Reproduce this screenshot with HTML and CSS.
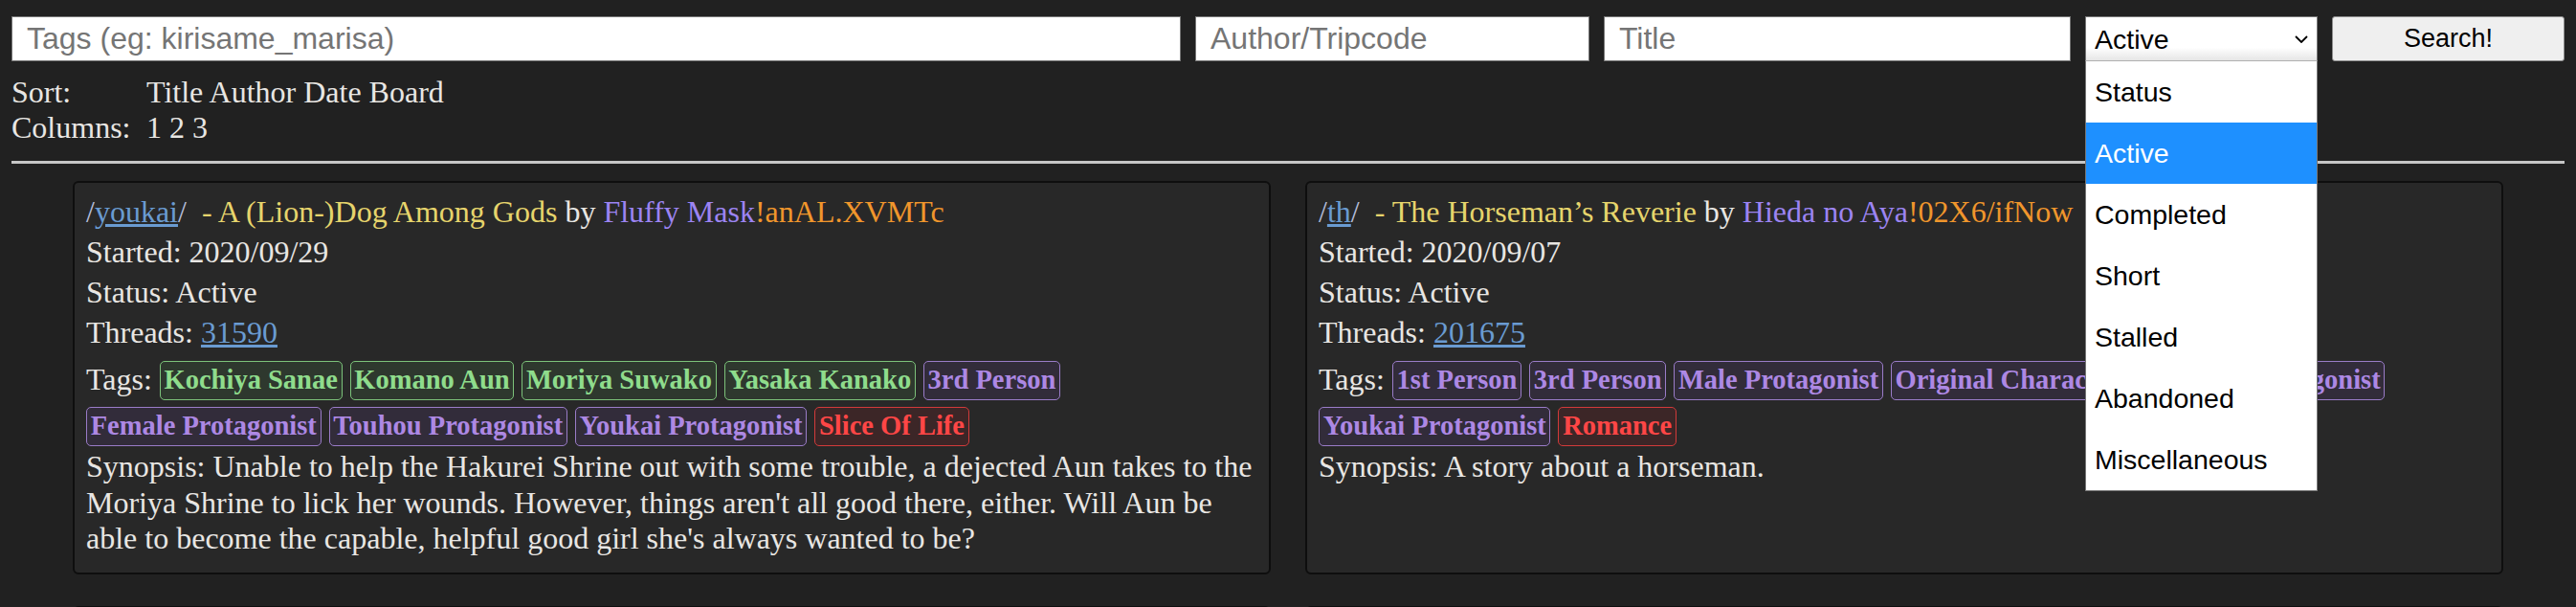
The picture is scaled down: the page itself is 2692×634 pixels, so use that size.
FILE: index.html
```html
<!DOCTYPE html>
<html>
<head>
	<title>Story Search</title>
	<link rel="stylesheet" href="styles.css">
</head>
<body>
	<form class="search" id="search-form">
		<input type="text" class="tags-input" name="tags" placeholder="Tags (eg: kirisame_marisa)">
		<input type="text" class="author-input" name="author" placeholder="Author/Tripcode">
		<input type="text" class="title-input" name="title" placeholder="Title">
		<div class="status-select">
			<select name="status">
				<option>Status</option>
				<option selected>Active</option>
				<option>Completed</option>
				<option>Short</option>
				<option>Stalled</option>
				<option>Abandoned</option>
				<option>Miscellaneous</option>
			</select>
			<svg class="chevron" width="14" height="8" viewBox="0 0 14 8"><path d="M1 1 L7 7 L13 1" fill="none" stroke="#000" stroke-width="1.8"/></svg>
			<ul class="status-menu">
				<li>Status</li>
				<li class="selected">Active</li>
				<li>Completed</li>
				<li>Short</li>
				<li>Stalled</li>
				<li>Abandoned</li>
				<li>Miscellaneous</li>
			</ul>
		</div>
		<button type="submit">Search!</button>
	</form>

	<div class="options">
		<span>Sort:</span>
		<span><a href="#">Title</a> <a href="#">Author</a> <a href="#">Date</a> <a href="#">Board</a></span>
		<span>Columns:</span>
		<span><a href="#">1</a> <a href="#">2</a> <a href="#">3</a></span>
	</div>
	<hr>

	<div class="stories">
		<div class="story">
			<div class="line"><span class="board">/<a href="#">youkai</a>/</span> &nbsp;<span class="subject">- A (Lion-)Dog Among Gods</span> by <span class="name">Fluffy Mask</span><span class="trip">!anAL.XVMTc</span></div>
			<div class="line">Started: 2020/09/29</div>
			<div class="line">Status: Active</div>
			<div class="line">Threads: <a href="#">31590</a></div>
			<div class="tags">Tags: <span class="tag green">Kochiya Sanae</span> <span class="tag green">Komano Aun</span> <span class="tag green">Moriya Suwako</span> <span class="tag green">Yasaka Kanako</span> <span class="tag purple">3rd Person</span> <span class="tag purple">Female Protagonist</span> <span class="tag purple">Touhou Protagonist</span> <span class="tag purple">Youkai Protagonist</span> <span class="tag red">Slice Of Life</span></div>
			<div class="synopsis">Synopsis: Unable to help the Hakurei Shrine out with some trouble, a dejected Aun takes to the Moriya Shrine to lick her wounds. However, things aren't all good there, either. Will Aun be able to become the capable, helpful good girl she's always wanted to be?</div>
		</div>
		<div class="story">
			<div class="line"><span class="board">/<a href="#">th</a>/</span> &nbsp;<span class="subject">- The Horseman’s Reverie</span> by <span class="name">Hieda no Aya</span><span class="trip">!02X6/ifNow</span></div>
			<div class="line">Started: 2020/09/07</div>
			<div class="line">Status: Active</div>
			<div class="line">Threads: <a href="#">201675</a></div>
			<div class="tags">Tags: <span class="tag purple">1st Person</span> <span class="tag purple">3rd Person</span> <span class="tag purple">Male Protagonist</span> <span class="tag purple">Original Character</span> <span class="tag purple">Outsider Protagonist</span> <span class="tag purple">Youkai Protagonist</span> <span class="tag red">Romance</span></div>
			<div class="synopsis">Synopsis: A story about a horseman.</div>
		</div>
		<div class="story">
			<div class="line"><span class="board">/<a href="#">th</a>/</span> &nbsp;<span class="subject">- Scarlet Tea Party</span> by <span class="name">Anonymous</span></div>
			<div class="line">Started: 2020/08/14</div>
			<div class="line">Status: Active</div>
			<div class="line">Threads: <a href="#">199802</a></div>
		</div>
		<div class="story">
			<div class="line"><span class="board">/<a href="#">youkai</a>/</span> &nbsp;<span class="subject">- Lanterns of the Old Capital</span> by <span class="name">Anonymous</span></div>
			<div class="line">Started: 2020/08/02</div>
			<div class="line">Status: Active</div>
			<div class="line">Threads: <a href="#">31422</a></div>
		</div>
	</div>
</body>
</html>
```

FILE: styles.css
```css
body {
	margin: 12px;
	background-color: #212121;
	color: #e8e6e3;
	font-family: "Liberation Serif", "Times New Roman", serif;
	font-size: 32px;
}
a {
	color: #6a9bd1;
}
.search {
	display: flex;
	gap: 15px;
	margin: 0;
	padding-top: 5px;
}
.search input[type="text"] {
	flex: none;
	height: 47px;
	padding: 0 15px;
	border: 1px solid #767676;
	background-color: #fff;
	color: #000;
	font-family: "Liberation Sans", Arial, sans-serif;
	font-size: 32px;
	box-sizing: border-box;
}
.search input::placeholder {
	color: #757575;
}
.search input.tags-input {
	flex: 1 1 auto;
	width: 0;
	min-width: 0;
}
.search input.author-input {
	width: 412px;
}
.search input.title-input {
	width: 488px;
}
.status-select {
	position: relative;
	flex: none;
	width: 243px;
}
.status-select select {
	appearance: none;
	display: block;
	width: 100%;
	height: 47px;
	margin: 0;
	padding: 0 0 0 9px;
	border: 1px solid #767676;
	border-bottom-color: #b0b0b0;
	background: linear-gradient(#fff 70%, #e6e6e6);
	color: #000;
	font-family: "Liberation Sans", Arial, sans-serif;
	font-size: 28.5px;
	box-sizing: border-box;
}
.chevron {
	position: absolute;
	top: 20px;
	right: 10px;
}
.status-menu {
	position: absolute;
	top: 47px;
	left: 0;
	width: 100%;
	margin: 0;
	padding: 0;
	list-style: none;
	background-color: #fff;
	border: 1px solid #767676;
	border-top: none;
	box-sizing: border-box;
	z-index: 10;
}
.status-menu li {
	height: 64px;
	line-height: 64px;
	padding-left: 9px;
	color: #000;
	font-family: "Liberation Sans", Arial, sans-serif;
	font-size: 28.5px;
}
.status-menu li.selected {
	background-color: #1e90ff;
	color: #fff;
}
.search button {
	flex: none;
	width: 243px;
	height: 47px;
	border: 1px solid #8f8f8f;
	border-radius: 3px;
	background-color: #efefef;
	color: #000;
	font-family: "Liberation Sans", Arial, sans-serif;
	font-size: 27px;
}
.options {
	display: grid;
	grid-template-columns: 141px auto;
	margin-top: 14px;
	line-height: 1.15;
}
.options a {
	color: inherit;
	text-decoration: none;
}
hr {
	height: 3px;
	margin: 16px 0 18px;
	border: none;
	background-color: #c6c6c6;
}
.stories {
	display: grid;
	grid-template-columns: 1fr 1fr;
	gap: 33px 36px;
	padding: 0 64px;
}
.story {
	padding: 9px 12px 16px;
	background-color: #282828;
	border: 2px solid #0e0e0e;
	border-radius: 6px;
}
.story .line {
	line-height: 42px;
}
.board {
	color: #b4bcd8;
}
.subject {
	color: #e6d46c;
}
.name {
	color: #9c84f2;
}
.trip {
	color: #f0962c;
}
.tags {
	margin-top: 6px;
	line-height: 42px;
}
.tag {
	display: inline-block;
	margin: 3.5px 0;
	padding: 3px 3.7px;
	border: 1px solid;
	border-radius: 5px;
	font-size: 28.5px;
	font-weight: bold;
	line-height: 1.15;
}
.tag.green {
	color: #8fdc8c;
	border-color: #7cc27a;
	background-color: #2e382e;
}
.tag.purple {
	color: #ad88e4;
	border-color: #9a7cc8;
	background-color: #322c3a;
}
.tag.red {
	color: #ff4646;
	border-color: #d23a3a;
	background-color: #3c2627;
}
.synopsis {
	line-height: 37.5px;
}
```
